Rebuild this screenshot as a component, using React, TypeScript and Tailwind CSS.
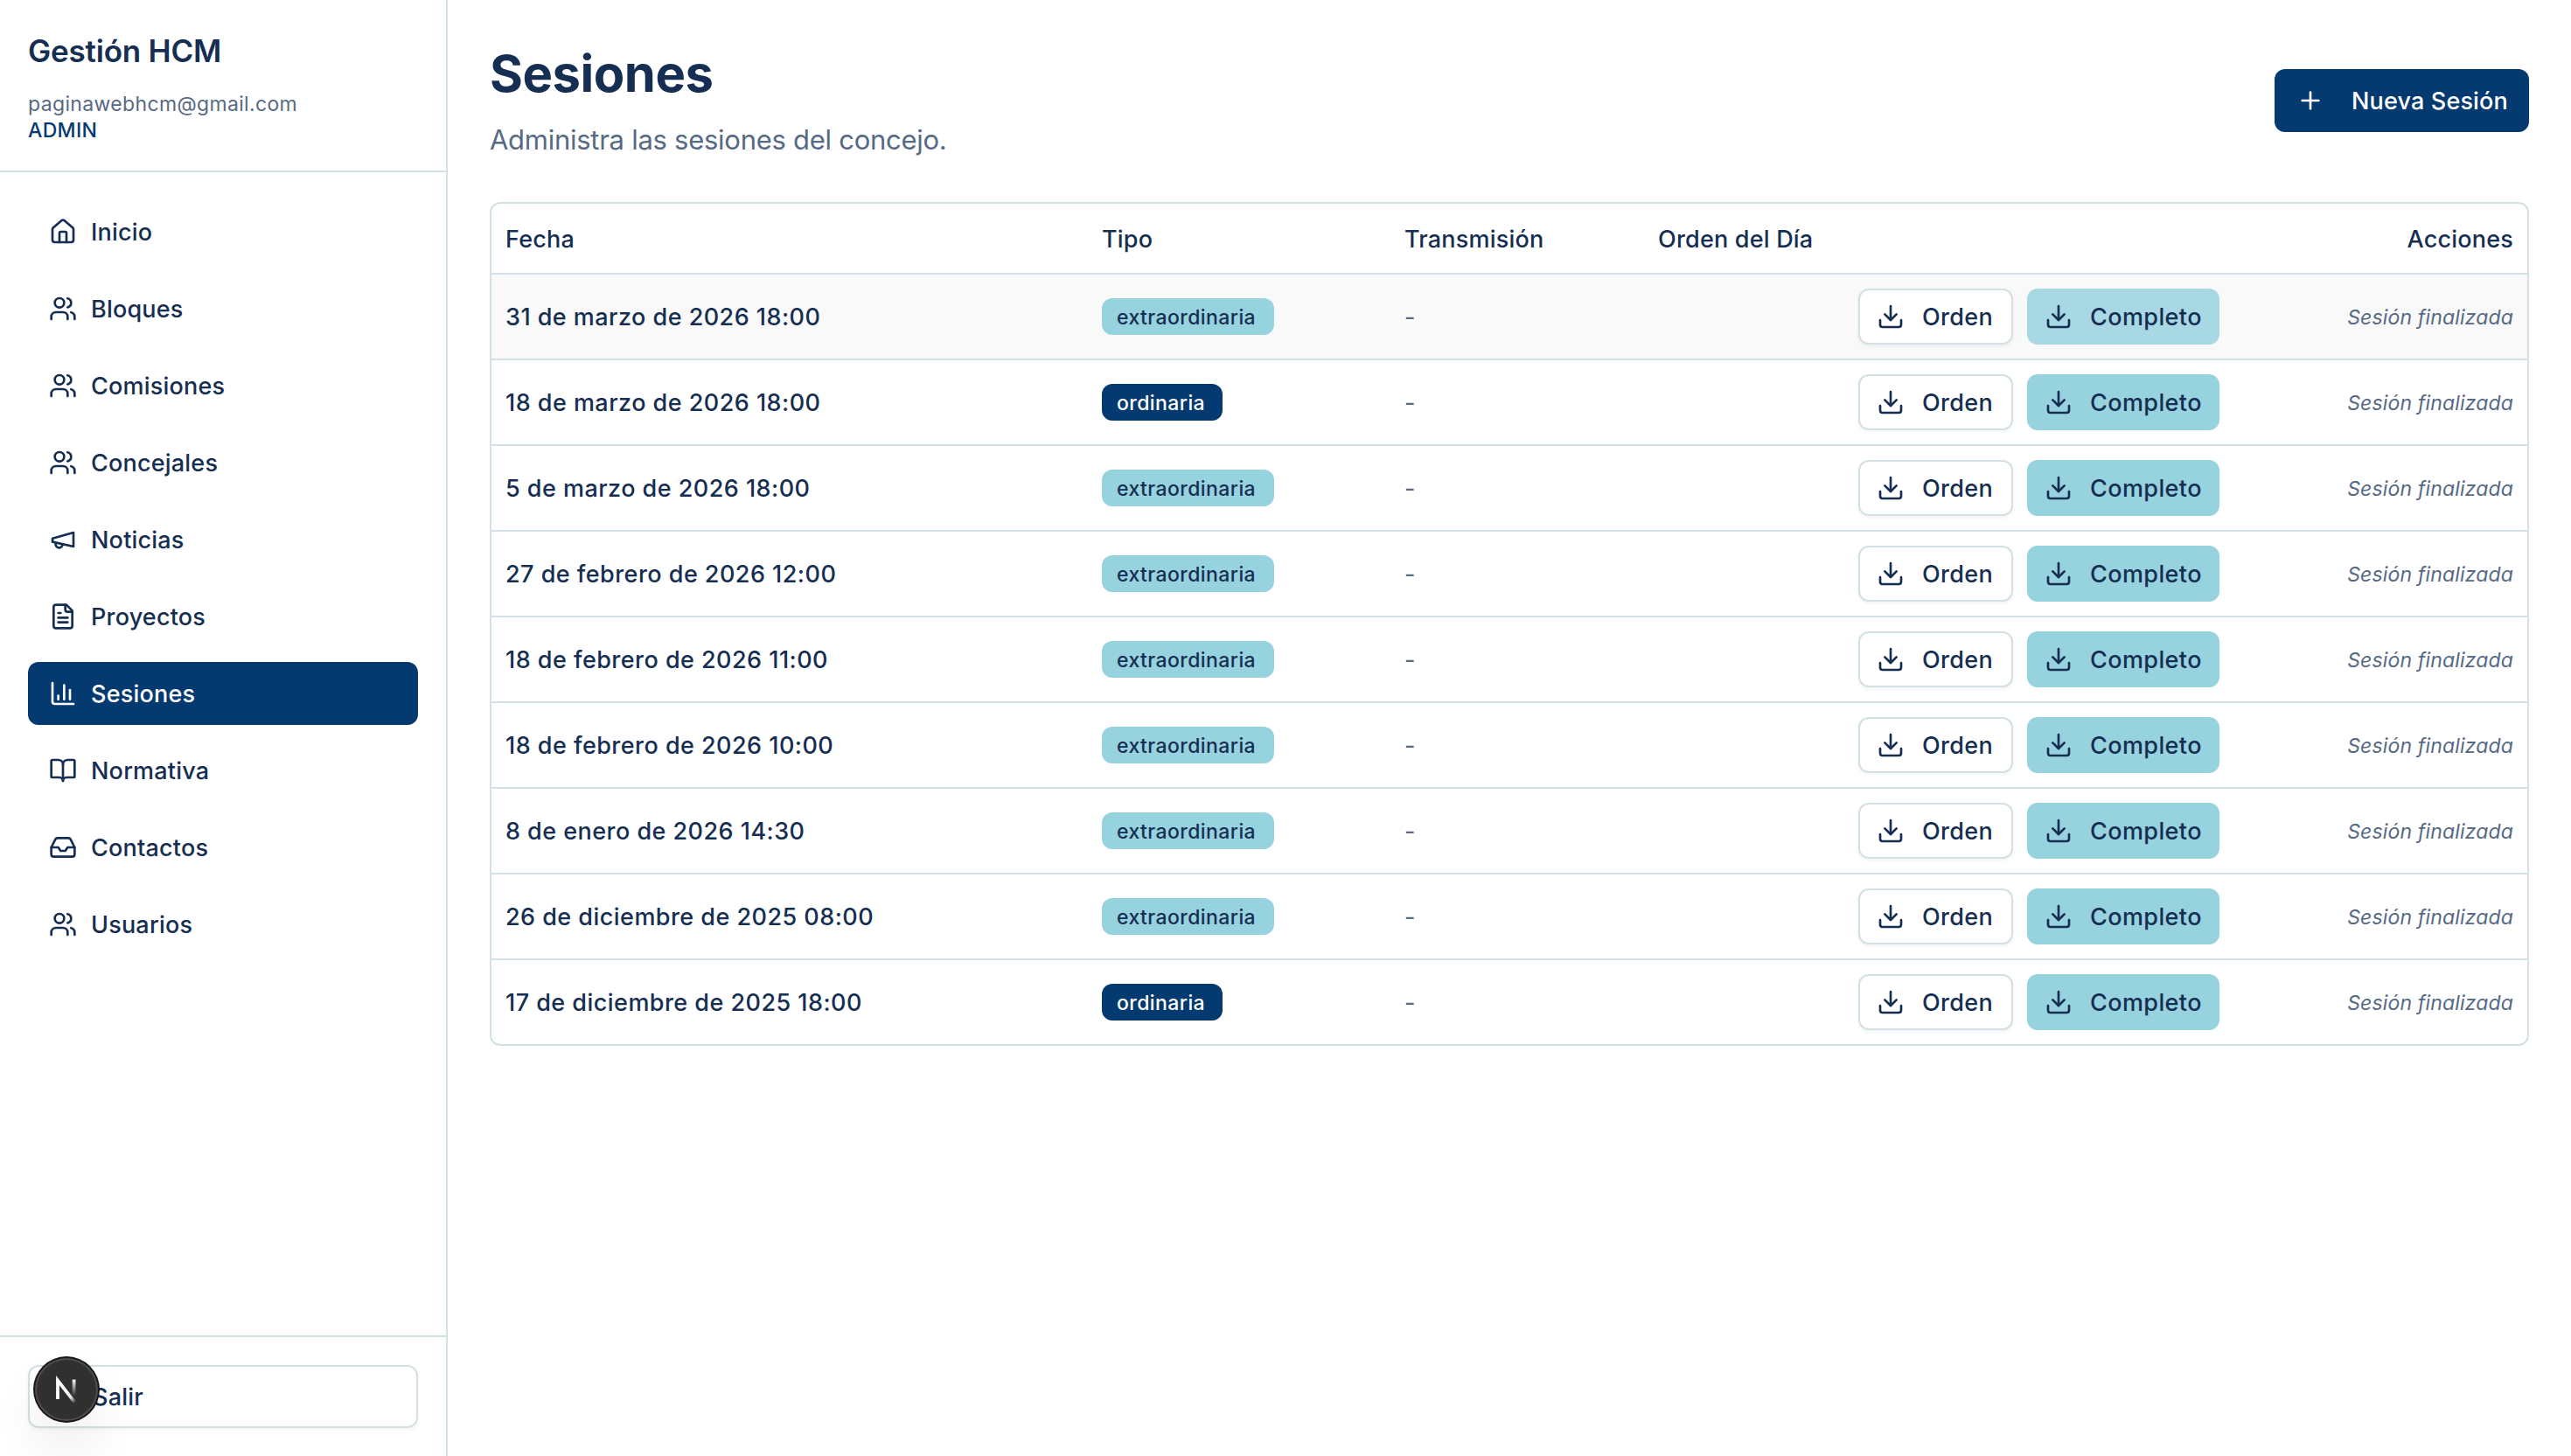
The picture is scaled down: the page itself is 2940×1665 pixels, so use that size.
import type { ComponentType, SVGProps } from 'react';
import { BookOpen, ChartColumn, Download, House, Inbox, LogOut, Plus, Users } from 'lucide-react';

type IconType = ComponentType<SVGProps<SVGSVGElement>>;
interface NavItem { label: string; icon: IconType; active?: boolean }
interface Sesion { fecha: string; tipo: 'ordinaria' | 'extraordinaria'; hovered?: boolean }

const strokeProps = {
  viewBox: '0 0 24 24',
  fill: 'none',
  stroke: 'currentColor',
  strokeWidth: 2,
  strokeLinecap: 'round',
  strokeLinejoin: 'round',
} as const;

function Megaphone(props: SVGProps<SVGSVGElement>) {
  return (
    <svg {...strokeProps} {...props}>
      <path d="m3 11 18-5v12L3 14v-3z" />
      <path d="M11.6 16.8a3 3 0 1 1-5.8-1.6" />
    </svg>
  );
}

function FileText(props: SVGProps<SVGSVGElement>) {
  return (
    <svg {...strokeProps} {...props}>
      <path d="M15 2H6a2 2 0 0 0-2 2v16a2 2 0 0 0 2 2h12a2 2 0 0 0 2-2V7Z" />
      <path d="M14 2v4a2 2 0 0 0 2 2h4" />
      <path d="M10 9H8" />
      <path d="M16 13H8" />
      <path d="M16 17H8" />
    </svg>
  );
}

const NAV: NavItem[] = [
  { label: 'Inicio', icon: House },
  { label: 'Bloques', icon: Users },
  { label: 'Comisiones', icon: Users },
  { label: 'Concejales', icon: Users },
  { label: 'Noticias', icon: Megaphone },
  { label: 'Proyectos', icon: FileText },
  { label: 'Sesiones', icon: ChartColumn, active: true },
  { label: 'Normativa', icon: BookOpen },
  { label: 'Contactos', icon: Inbox },
  { label: 'Usuarios', icon: Users },
];

const SESIONES: Sesion[] = [
  { fecha: '31 de marzo de 2026 18:00', tipo: 'extraordinaria', hovered: true },
  { fecha: '18 de marzo de 2026 18:00', tipo: 'ordinaria' },
  { fecha: '5 de marzo de 2026 18:00', tipo: 'extraordinaria' },
  { fecha: '27 de febrero de 2026 12:00', tipo: 'extraordinaria' },
  { fecha: '18 de febrero de 2026 11:00', tipo: 'extraordinaria' },
  { fecha: '18 de febrero de 2026 10:00', tipo: 'extraordinaria' },
  { fecha: '8 de enero de 2026 14:30', tipo: 'extraordinaria' },
  { fecha: '26 de diciembre de 2025 08:00', tipo: 'extraordinaria' },
  { fecha: '17 de diciembre de 2025 18:00', tipo: 'ordinaria' },
];

const BADGE_STYLE: Record<Sesion['tipo'], string> = {
  ordinaria: 'w-[138px] bg-[#053a70] text-white',
  extraordinaria: 'w-[197px] bg-[#97d2df]',
};

function Sidebar() {
  return (
    <aside className="flex w-[512px] shrink-0 flex-col border-r-2 border-[#d3e1e4]">
      <div className="h-[197px] border-b-2 border-[#d3e1e4] px-8 pt-8">
        <h2 className="text-[35px] leading-[52px] font-semibold tracking-[-0.2px]">Gestión HCM</h2>
        <p className="mt-5 text-[23px] leading-[30px] font-normal tracking-[0.35px] text-[#566a85]">paginawebhcm@gmail.com</p>
        <p className="text-[23px] leading-[30px] tracking-[0.35px] text-[#053a70]">ADMIN</p>
      </div>

      <nav className="flex flex-1 flex-col gap-4 p-8">
        {NAV.map(({ label, icon: Icon, active }) => (
          <a
            key={label}
            className={`flex h-[72px] items-center gap-4 rounded-xl px-6 ${active ? 'bg-[#053a70] text-white' : ''}`}
          >
            <Icon className="size-8" />
            <span className="pt-0.5 tracking-[0.2px]">{label}</span>
          </a>
        ))}
      </nav>

      <div className="border-t-2 border-[#d3e1e4] p-8">
        <button className="flex h-[72px] w-full items-center gap-4 rounded-xl border-2 border-[#d3e1e4] pl-6 shadow-[0_2px_4px_rgba(0,0,0,0.05)]">
          <LogOut className="size-8" />
          <span className="pt-0.5 tracking-[0.2px]">Salir</span>
        </button>
      </div>
    </aside>
  );
}

function SesionRow({ fecha, tipo, hovered }: Sesion) {
  return (
    <tr className={`group ${hovered ? 'bg-[#f9f9f9]' : ''}`}>
      <td className="h-[98px] border-b-2 border-[#d3e1e4] px-4 pt-0.5 tracking-[0.46px] group-last:h-24 group-last:border-b-0">{fecha}</td>
      <td className="border-b-2 border-[#d3e1e4] px-4 group-last:border-b-0">
        <div className={`flex h-[42px] items-center rounded-xl pt-0.5 pl-[17px] text-[23px] tracking-[0.42px] ${BADGE_STYLE[tipo]}`}>
          {tipo}
        </div>
      </td>
      <td className="border-b-2 border-[#d3e1e4] px-4 pt-0.5 font-normal text-[#566a85] group-last:border-b-0">-</td>
      <td className="border-b-2 border-[#d3e1e4] px-4 group-last:border-b-0">
        <div className="flex justify-end gap-4">
          <button className="flex h-16 w-[177px] items-center gap-5 rounded-xl border-2 border-[#d3e1e4] bg-white pl-[19px] shadow-[0_2px_4px_rgba(0,0,0,0.05)]">
            <Download className="size-8" />
            <span className="pt-0.5 tracking-[0.3px]">Orden</span>
          </button>
          <button className={`flex h-16 w-[220px] items-center gap-5 rounded-xl pl-5 ${hovered ? 'bg-[#a8d8e4]' : 'bg-[#97d2df]'}`}>
            <Download className="size-8" />
            <span className="pt-0.5 tracking-[0.4px]">Completo</span>
          </button>
        </div>
      </td>
      <td className="border-b-2 border-[#d3e1e4] px-4 pt-0.5 text-right text-[23px] font-normal tracking-[0.15px] text-[#566a85] italic group-last:border-b-0">
        Sesión finalizada
      </td>
    </tr>
  );
}

// Next.js dev tools indicator floating over the sidebar footer
function DevIndicator() {
  return (
    <div className="fixed bottom-10 left-10 flex size-[72px] items-center justify-center rounded-full bg-[#303030] shadow-[0_0_0_2px_#171717,inset_0_0_0_2px_rgba(255,255,255,0.14),0_32px_64px_-16px_rgba(0,0,0,0.24)]">
      <svg className="size-20 shrink-0" viewBox="0 0 80 80" fill="none" strokeWidth="3.8">
        <defs>
          <linearGradient id="next-diag" x1="41" y1="43" x2="50" y2="55" gradientUnits="userSpaceOnUse">
            <stop stopColor="#fff" />
            <stop offset="0.5" stopColor="#fff" stopOpacity="0.85" />
            <stop offset="1" stopColor="#fff" stopOpacity="0" />
          </linearGradient>
          <linearGradient id="next-bar" x1="48" y1="28" x2="48" y2="47" gradientUnits="userSpaceOnUse">
            <stop stopColor="#fff" />
            <stop offset="1" stopColor="#fff" stopOpacity="0" />
          </linearGradient>
        </defs>
        <path d="M50.2 55.6 30 29.6V51" stroke="url(#next-diag)" />
        <path d="M48.6 28.6V49" stroke="url(#next-bar)" />
      </svg>
    </div>
  );
}

export default function App() {
  return (
    <div className="flex h-[1665px] bg-white font-['Inter',sans-serif] text-[27px] leading-10 font-medium text-[#152e52]">
      <Sidebar />

      <main className="flex-1 p-12">
        <div className="flex items-start justify-between">
          <div>
            <h1 className="text-[58px] leading-[72px] font-bold tracking-[-0.5px]">Sesiones</h1>
            <p className="mt-4 text-[31px] leading-[47px] font-normal tracking-[-0.27px] text-[#566a85]">
              Administra las sesiones del concejo.
            </p>
          </div>
          <button className="mt-[31px] flex h-[72px] w-[291px] items-center gap-[31px] rounded-xl bg-[#053a70] pl-[25px] text-white">
            <Plus className="size-8" />
            <span className="pt-0.5 tracking-[0.15px]">Nueva Sesión</span>
          </button>
        </div>

        <div className="mt-12 overflow-hidden rounded-xl border-2 border-[#d3e1e4]">
          <table className="w-full table-fixed border-separate border-spacing-0">
            <thead>
              <tr className="text-left tracking-[0.2px]">
                <th className="h-[81px] w-[682px] border-b-2 border-[#d3e1e4] px-4 pt-0.5 font-medium">Fecha</th>
                <th className="w-[346px] border-b-2 border-[#d3e1e4] px-4 pt-0.5 font-medium">Tipo</th>
                <th className="w-[290px] border-b-2 border-[#d3e1e4] px-4 pt-0.5 font-medium">Transmisión</th>
                <th className="w-[674px] border-b-2 border-[#d3e1e4] px-4 pt-0.5 font-medium">Orden del Día</th>
                <th className="w-[336px] border-b-2 border-[#d3e1e4] px-4 pt-0.5 text-right font-medium">Acciones</th>
              </tr>
            </thead>
            <tbody>
              {SESIONES.map((sesion) => (
                <SesionRow key={sesion.fecha} {...sesion} />
              ))}
            </tbody>
          </table>
        </div>
      </main>

      <DevIndicator />
    </div>
  );
}
